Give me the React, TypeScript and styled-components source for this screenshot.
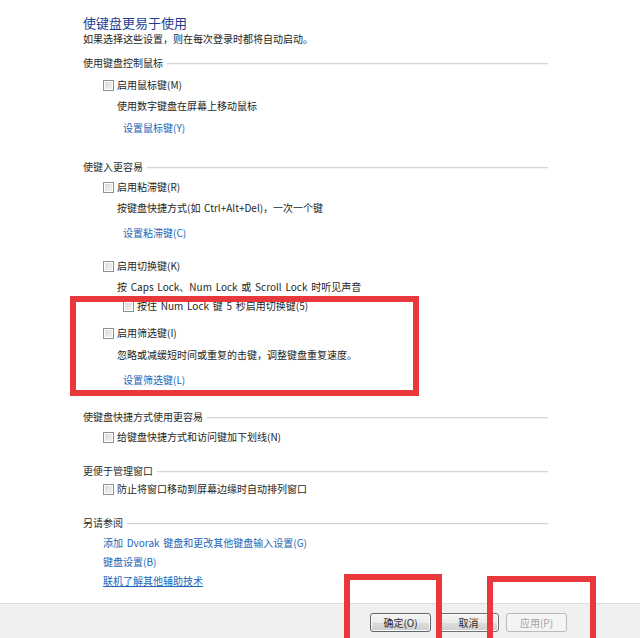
import styled, { createGlobalStyle } from "styled-components";

const GlobalStyle = createGlobalStyle`
  html, body {
    margin: 0;
    padding: 0;
    background: #ffffff;
  }
  body {
    font-family: "Noto Sans CJK SC", "Noto Sans", sans-serif;
    font-size: 10px;
    color: #1e1e1e;
    word-spacing: 1.5px;
  }
`;

const Page = styled.div`
  position: relative;
  width: 640px;
  height: 638px;
  overflow: hidden;
  display: flex;
  flex-direction: column;
`;

const Main = styled.div`
  flex: 1;
  padding: 14px 0 0 83px;
  width: 465px;
`;

const Title = styled.h1`
  margin: 0;
  font-size: 13px;
  line-height: 17px;
  font-weight: normal;
  color: #1f3d8f;
`;

const Line = styled.div<{ $top: number; $indent?: number }>`
  margin-top: ${(p) => p.$top}px;
  padding-left: ${(p) => p.$indent ?? 0}px;
  line-height: 16px;
  height: 16px;
  white-space: nowrap;
`;

const Header = styled.div<{ $top: number }>`
  display: flex;
  align-items: center;
  margin-top: ${(p) => p.$top}px;
  line-height: 16px;
  height: 16px;
  color: #2a2a2a;
`;

const Rule = styled.span`
  flex: 1;
  height: 1px;
  margin-left: 4px;
  background: #d4d4d4;
  box-shadow: 0 1px 0 #f4f4f4;
`;

const CheckRow = styled.label<{ $top: number; $indent: number }>`
  display: flex;
  align-items: center;
  gap: 3px;
  margin-top: ${(p) => p.$top}px;
  padding-left: ${(p) => p.$indent}px;
  line-height: 16px;
  height: 16px;
  white-space: nowrap;
`;

const Box = styled.span`
  width: 9px;
  height: 9px;
  border: 1px solid #8e8f8f;
  background: linear-gradient(135deg, #d8d8d8, #f5f5f5);
  box-shadow: inset 0 0 0 1px #ffffff;
  flex-shrink: 0;
`;

const Link = styled.a<{ $top: number; $indent: number; $underline?: boolean }>`
  display: block;
  margin-top: ${(p) => p.$top}px;
  padding-left: ${(p) => p.$indent}px;
  line-height: 16px;
  height: 16px;
  color: #2366b8;
  text-decoration: ${(p) => (p.$underline ? "underline" : "none")};
  white-space: nowrap;
`;

const Footer = styled.div`
  height: 35px;
  border-top: 1px solid #dcdcdc;
  background: #f0f0f0;
  display: flex;
  align-items: flex-start;
  gap: 7px;
  padding: 9px 0 0 370px;
  box-sizing: border-box;
`;

const Button = styled.button<{ $primary?: boolean }>`
  width: 61px;
  height: 19px;
  padding: 0;
  font-family: inherit;
  font-size: 10px;
  line-height: 16px;
  color: ${(p) => (p.disabled ? "#a3a3a3" : "#2a2a2a")};
  border: 1px solid ${(p) => (p.disabled ? "#b8bcbf" : p.$primary ? "#5e6468" : "#707070")};
  border-radius: 3px;
  background: ${(p) =>
    p.disabled ? "#f4f4f4" : "linear-gradient(#f4f4f4 0%, #ebebeb 50%, #dcdcdc 51%, #cfcfcf 100%)"};
  box-shadow: ${(p) => (p.disabled ? "none" : "inset 0 0 0 1px #fbfbfb")};
`;

const Mark = styled.div<{ $left: number; $top: number; $width: number; $height: number }>`
  position: absolute;
  left: ${(p) => p.$left}px;
  top: ${(p) => p.$top}px;
  width: ${(p) => p.$width}px;
  height: ${(p) => p.$height}px;
  border: 6px solid #e8383b;
  box-sizing: border-box;
  pointer-events: none;
`;

function Check({ top, indent, children }: { top: number; indent: number; children: string }) {
  return (
    <CheckRow $top={top} $indent={indent}>
      <Box />
      <span>{children}</span>
    </CheckRow>
  );
}

export default function App() {
  return (
    <Page>
      <GlobalStyle />
      <Main>
        <Title>使键盘更易于使用</Title>
        <Line $top={0}>如果选择这些设置，则在每次登录时都将自动启动。</Line>

        <Header $top={8}>使用键盘控制鼠标<Rule /></Header>
        <Check top={6} indent={20}>启用鼠标键(M)</Check>
        <Line $top={5} $indent={34}>使用数字键盘在屏幕上移动鼠标</Line>
        <Link $top={6} $indent={40}>设置鼠标键(Y)</Link>

        <Header $top={23}>使键入更容易<Rule /></Header>
        <Check top={4} indent={20}>启用粘滞键(R)</Check>
        <Line $top={5} $indent={34}>按键盘快捷方式(如 Ctrl+Alt+Del)，一次一个键</Line>
        <Link $top={9} $indent={40}>设置粘滞键(C)</Link>
        <Check top={17} indent={20}>启用切换键(K)</Check>
        <Line $top={5} $indent={34}>按 Caps Lock、Num Lock 或 Scroll Lock 时听见声音</Line>
        <Check top={3} indent={40}>按住 Num Lock 键 5 秒启用切换键(5)</Check>
        <Check top={11} indent={20}>启用筛选键(I)</Check>
        <Line $top={6} $indent={34}>忽略或减缓短时间或重复的击键，调整键盘重复速度。</Line>
        <Link $top={9} $indent={40}>设置筛选键(L)</Link>

        <Header $top={21}>使键盘快捷方式使用更容易<Rule /></Header>
        <Check top={4} indent={20}>给键盘快捷方式和访问键加下划线(N)</Check>

        <Header $top={18}>更便于管理窗口<Rule /></Header>
        <Check top={2} indent={20}>防止将窗口移动到屏幕边缘时自动排列窗口</Check>

        <Header $top={18}>另请参阅<Rule /></Header>
        <Link $top={4} $indent={20}>添加 Dvorak 键盘和更改其他键盘输入设置(G)</Link>
        <Link $top={3} $indent={20}>键盘设置(B)</Link>
        <Link $top={3} $indent={20} $underline>联机了解其他辅助技术</Link>
      </Main>
      <Footer>
        <Button $primary>确定(O)</Button>
        <Button>取消</Button>
        <Button disabled>应用(P)</Button>
      </Footer>

      <Mark $left={70} $top={296} $width={349} $height={100} />
      <Mark $left={344} $top={574} $width={98} $height={90} />
      <Mark $left={487} $top={576} $width={109} $height={90} />
    </Page>
  );
}
